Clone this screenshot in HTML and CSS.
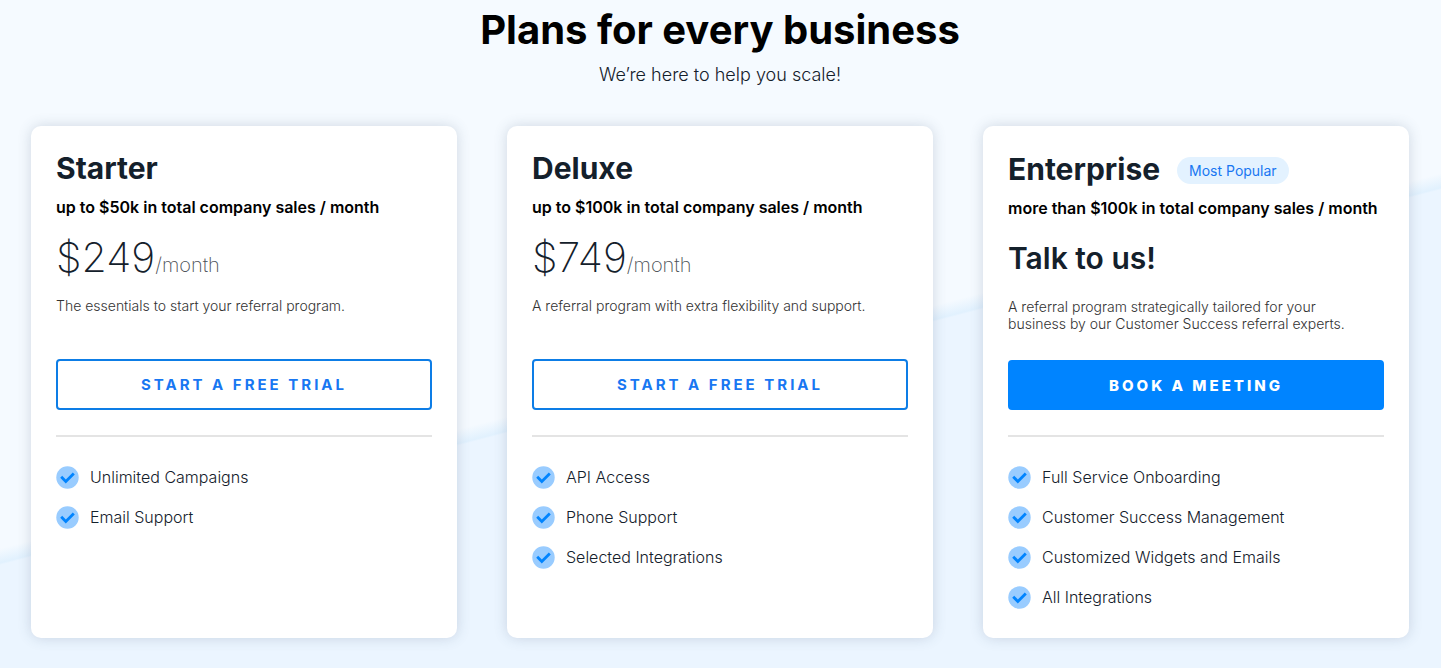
FILE: index.html
```
<!DOCTYPE html>
<html lang="en">
<head>
    <meta charset="UTF-8">
    <meta name="viewport" content="width=device-width, initial-scale=1.0">
    <title>Plans for every business</title>
    <link rel="stylesheet" href="styles.css">
</head>
<body>
    <!-- Check icon shared by all feature lists -->
    <svg class="sprite" aria-hidden="true">
        <symbol id="check" viewBox="0 0 23 23">
            <circle cx="11.5" cy="11.5" r="11.2" fill="#99ccff"/>
            <path d="M5.2 10.8l4.6 4.6 8-8" fill="none" stroke="#0084ff" stroke-width="2.8"/>
        </symbol>
    </svg>

    <section class="pricing">
        <header class="pricing-header">
            <h1>Plans for every business</h1>
            <p>We’re here to help you scale!</p>
        </header>

        <div class="plans">
            <article class="plan">
                <div class="plan-title">
                    <h2>Starter</h2>
                </div>
                <p class="plan-limit">up to $50k in total company sales / month</p>
                <p class="plan-price">$249<span>/month</span></p>
                <p class="plan-text">The essentials to start your referral program.</p>
                <button type="button" class="btn">START A FREE TRIAL</button>
                <ul class="features">
                    <li><svg><use href="#check"/></svg>Unlimited Campaigns</li>
                    <li><svg><use href="#check"/></svg>Email Support</li>
                </ul>
            </article>

            <article class="plan">
                <div class="plan-title">
                    <h2>Deluxe</h2>
                </div>
                <p class="plan-limit">up to $100k in total company sales / month</p>
                <p class="plan-price">$749<span>/month</span></p>
                <p class="plan-text">A referral program with extra flexibility and support.</p>
                <button type="button" class="btn">START A FREE TRIAL</button>
                <ul class="features">
                    <li><svg><use href="#check"/></svg>API Access</li>
                    <li><svg><use href="#check"/></svg>Phone Support</li>
                    <li><svg><use href="#check"/></svg>Selected Integrations</li>
                </ul>
            </article>

            <article class="plan">
                <div class="plan-title">
                    <h2>Enterprise</h2>
                    <span class="badge">Most Popular</span>
                </div>
                <p class="plan-limit">more than $100k in total company sales / month</p>
                <p class="plan-price plan-talk">Talk to us!</p>
                <p class="plan-text">A referral program strategically tailored for your business by our Customer Success referral experts.</p>
                <button type="button" class="btn btn-primary">BOOK A MEETING</button>
                <ul class="features">
                    <li><svg><use href="#check"/></svg>Full Service Onboarding</li>
                    <li><svg><use href="#check"/></svg>Customer Success Management</li>
                    <li><svg><use href="#check"/></svg>Customized Widgets and Emails</li>
                    <li><svg><use href="#check"/></svg>All Integrations</li>
                </ul>
            </article>
        </div>
    </section>
</body>
</html>
```
FILE: styles.css
```
* {
    box-sizing: border-box;
}
body {
    margin: 0;
    min-height: 100vh;
    font-family: 'Inter', 'Liberation Sans', sans-serif;
    color: #14202b;
    /* slanted split between the two blues */
    background: linear-gradient(165.4deg, #f5faff calc(50% + 26px), #e1f1fe calc(50% + 40px), #ebf5ff calc(50% + 42px));
}
h1, h2, p, ul {
    margin: 0;
    padding: 0;
}
.sprite {
    position: absolute;
    width: 0;
    height: 0;
}
.pricing {
    padding: 5px 32px 30px 31px;
}
.pricing-header {
    text-align: center;
    margin-bottom: 39px;
}
.pricing-header h1 {
    font-size: 40px;
    line-height: 50px;
    font-weight: 700;
    color: #000;
}
.pricing-header p {
    margin-top: 8px;
    font-size: 18px;
    line-height: 24px;
    font-weight: 300;
}
.plans {
    display: grid;
    grid-template-columns: repeat(3, 1fr);
    gap: 50px;
}
.plan {
    padding: 24px 25px 21px;
    background: #fff;
    border-radius: 10px;
    box-shadow: 0 0 14px rgba(60, 80, 110, 0.2);
}
.plan-title {
    display: flex;
    align-items: flex-end;
}
.plan-title h2 {
    font-size: 30px;
    line-height: 36px;
    font-weight: 700;
}
.badge {
    margin: 7px 0 3px 17px;
    padding: 0 12px;
    border-radius: 14px;
    background: #e3f2ff;
    color: #1877f2;
    font-size: 14px;
    line-height: 27px;
}
.plan-limit {
    margin-top: 11px;
    font-size: 16px;
    line-height: 20px;
    font-weight: 600;
    color: #000;
}
.plan-price {
    margin-top: 13px;
    height: 54px;
    font-size: 41px;
    line-height: 54px;
    font-weight: 200;
}
.plan-price span {
    font-size: 20px;
    color: #4a4f55;
}
.plan-talk {
    font-size: 30px;
    font-weight: 600;
}
.plan-text {
    min-height: 34px;
    max-width: 350px;
    margin-top: 13px;
    font-size: 14px;
    line-height: 17px;
    font-weight: 300;
    color: #333;
}
.btn {
    display: block;
    width: 100%;
    height: 51px;
    margin-top: 28px;
    border: 2px solid #0d7de6;
    border-radius: 4px;
    background: #fff;
    color: #1877f2;
    font-family: inherit;
    font-size: 15px;
    font-weight: 700;
    letter-spacing: 3px;
    cursor: pointer;
}
.btn-primary {
    height: 50px;
    border-color: #0084ff;
    background: #0084ff;
    color: #fff;
    font-weight: 800;
}
.features {
    margin-top: 25px;
    padding-top: 20px;
    border-top: 2px solid #e4e4e4;
    list-style: none;
}
.features li {
    display: flex;
    align-items: center;
    gap: 11px;
    height: 40px;
    font-size: 16px;
    font-weight: 300;
}
.features svg {
    width: 23px;
    height: 23px;
}
```
